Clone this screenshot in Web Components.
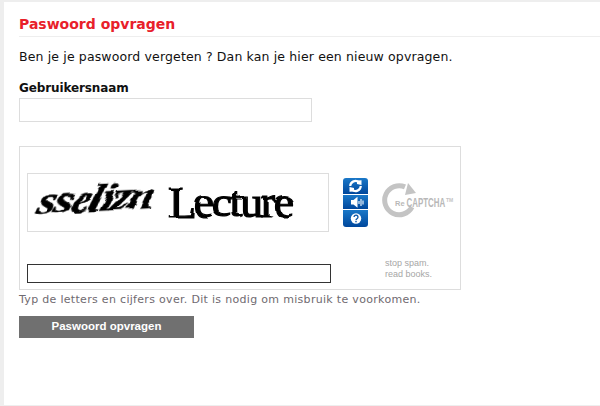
<!DOCTYPE html>
<html>
<head>
<meta charset="utf-8">
<title>Paswoord opvragen</title>
<style>
    html, body { margin: 0; height: 100%; }
    body { background: #eeeeee; font-family: "DejaVu Sans", Verdana, sans-serif; overflow: hidden; }
</style>
</head>
<body>
<request-page>
    <page-title>Paswoord opvragen</page-title>
    <p>Ben je je paswoord vergeten ? Dan kan je hier een nieuw opvragen.</p>
    <user-field label="Gebruikersnaam"></user-field>
    <captcha-box></captcha-box>
    <small>Typ de letters en cijfers over. Dit is nodig om misbruik te voorkomen.</small>
    <submit-button>Paswoord opvragen</submit-button>
</request-page>

<script>
class RequestPage extends HTMLElement {
    constructor() {
        super();
        this.attachShadow({ mode: 'open' });
        this.shadowRoot.innerHTML = `
            <style>
                :host {
                    display: block;
                    box-sizing: border-box;
                    height: 403px;
                    margin: 2px 0 0 4px;
                    padding-left: 15px;
                    background: #fff;
                }
                ::slotted(p) {
                    margin: 12px 0 0;
                    font-size: 12.5px;
                    line-height: 15px;
                    letter-spacing: 0.14px;
                    color: #111;
                }
                ::slotted(small) {
                    display: block;
                    margin-top: 2px;
                    font-size: 11px;
                    line-height: 15px;
                    letter-spacing: 0.31px;
                    color: #6f6a70;
                }
            </style>
            <slot></slot>
        `;
    }
}

class PageTitle extends HTMLElement {
    constructor() {
        super();
        this.attachShadow({ mode: 'open' });
        this.shadowRoot.innerHTML = `
            <style>
                :host {
                    display: block;
                    height: 35px;
                    box-sizing: border-box;
                    padding-top: 14px;
                    border-bottom: 1px solid #eeeeee;
                    font-size: 14px;
                    line-height: 17px;
                    font-weight: bold;
                    color: #e8202a;
                }
            </style>
            <slot></slot>
        `;
    }
}

class UserField extends HTMLElement {
    constructor() {
        super();
        this.attachShadow({ mode: 'open' });
        this.shadowRoot.innerHTML = `
            <style>
                :host { display: block; margin-top: 17px; }
                label {
                    display: block;
                    font-size: 12px;
                    line-height: 15px;
                    letter-spacing: -0.12px;
                    font-weight: bold;
                    color: #111;
                    margin-bottom: 2px;
                }
                input {
                    display: block;
                    box-sizing: border-box;
                    width: 293px;
                    height: 24px;
                    margin: 0;
                    padding: 2px;
                    border: 1px solid #dddddd;
                    background: #fff;
                    outline: none;
                }
            </style>
            <label></label>
            <input type="text">
        `;
        this.shadowRoot.querySelector('label').textContent = this.getAttribute('label');
    }
}

class CaptchaBox extends HTMLElement {
    constructor() {
        super();
        this.attachShadow({ mode: 'open' });
        this.shadowRoot.innerHTML = `
            <style>
                :host {
                    display: flex;
                    box-sizing: border-box;
                    width: 442px;
                    height: 144px;
                    margin-top: 24px;
                    padding: 26px 0 0 7px;
                    border: 1px solid #dddddd;
                    background: #fff;
                }
                .left { width: 316px; flex: none; }
                .image {
                    box-sizing: border-box;
                    width: 302px;
                    height: 59px;
                    border: 1px solid #dddddd;
                    padding: 0 0 0 7px;
                    display: flex;
                    align-items: center;
                    font-family: "Liberation Serif", serif;
                    color: #000;
                    overflow: hidden;
                    white-space: nowrap;
                }
                .w1 {
                    display: block;
                    width: 133px;
                    flex: none;
                    font-size: 38px;
                    font-weight: bold;
                    font-style: italic;
                    letter-spacing: -1.5px;
                    transform: translate(4px, -2px) rotate(-3deg) scaleX(1.24) skewX(-16deg);
                    transform-origin: left center;
                    -webkit-text-stroke: 0.6px #000;
                    filter: url(#warp1);
                }
                .w2 {
                    display: block;
                    font-size: 44px;
                    letter-spacing: -2.2px;
                    transform: translate(0, 0) scaleX(1.04);
                    transform-origin: left center;
                    -webkit-text-stroke: 1.2px #000;
                    filter: url(#warp2);
                }
                .warp { position: absolute; width: 0; height: 0; }
                input {
                    display: block;
                    box-sizing: border-box;
                    width: 304px;
                    height: 19px;
                    margin: 32px 0 0;
                    padding: 1px;
                    border: 1px solid #333;
                    background: #fff;
                    outline: none;
                }
                .right {
                    display: flex;
                    flex-direction: column;
                }
                .top { display: flex; margin-top: 5px; }
                .buttons {
                    width: 25px;
                    height: 49px;
                    flex: none;
                    display: block;
                }
                .logo { margin: 5px 0 0 13px; display: block; }
                .tag {
                    margin: 31px 0 0 42px;
                    font-family: "Liberation Sans", Arial, sans-serif;
                    font-size: 9px;
                    line-height: 11px;
                    color: #a6a6a6;
                }
            </style>
            <svg class="warp">
                <filter id="warp1" x="-10%" y="-20%" width="120%" height="140%">
                    <feTurbulence type="fractalNoise" baseFrequency="0.05 0.09" numOctaves="2" seed="4"/>
                    <feDisplacementMap in="SourceGraphic" scale="6"/>
                </filter>
                <filter id="warp2" x="-10%" y="-20%" width="120%" height="140%">
                    <feTurbulence type="fractalNoise" baseFrequency="0.035 0.06" numOctaves="2" seed="9"/>
                    <feDisplacementMap in="SourceGraphic" scale="5"/>
                </filter>
            </svg>
            <div class="left">
                <div class="image"><span class="w1">sselizn</span><span class="w2">Lecture</span></div>
                <input type="text">
            </div>
            <div class="right">
                <div class="top">
                    <svg class="buttons" viewBox="0 0 25 49">
                        <defs>
                            <linearGradient id="b" x1="0" y1="0" x2="0" y2="1">
                                <stop offset="0" stop-color="#1a78c8"/>
                                <stop offset="1" stop-color="#00479c"/>
                            </linearGradient>
                        </defs>
                        <path d="M3 0H22a3 3 0 0 1 3 3V16H0V3a3 3 0 0 1 3-3z" fill="url(#b)"/>
                        <rect y="17" width="25" height="14" fill="url(#b)"/>
                        <path d="M0 32H25V46a3 3 0 0 1-3 3H3a3 3 0 0 1-3-3z" fill="url(#b)"/>
                        <path d="M7.2 8a5.3 5.3 0 0 1 8.8-3.7" fill="none" stroke="#fff" stroke-width="2.2"/>
                        <path d="M14 2.5L18.5 2.2V7L14 6z" fill="#fff"/>
                        <path d="M17.8 8a5.3 5.3 0 0 1-8.8 3.7" fill="none" stroke="#fff" stroke-width="2.2"/>
                        <path d="M11 13.5L6.5 13.8V9L11 10z" fill="#fff"/>
                        <path d="M8 22h2.5l4-3.2v11L10.500 26.500H8z" fill="#fff"/>
                        <path d="M16 23v3M18 21v7M20 22.500v4" stroke="#fff" stroke-width="1.1" fill="none"/>
                        <circle cx="13" cy="40.500" r="5.200" fill="#fff"/>
                        <path d="M11 39a2 2 0 1 1 3 1.800c-.7.4-1 .7-1 1.400" fill="none" stroke="#0a56a8" stroke-width="1.300"/>
                        <rect x="12.300" y="43" width="1.400" height="1.300" fill="#0a56a8"/>
                    </svg>
                    <svg class="logo" width="76" height="38" viewBox="0 0 76 38">
                        <path d="M24 3.900A14.500 14.500 0 1 0 31 24" fill="none" stroke="#c4c4c4" stroke-width="5"/>
                        <path d="M27 0L35 10L24 12z" fill="#c4c4c4"/>
                        <text x="14" y="23" font-family="Liberation Sans" font-size="7.500" font-weight="bold" fill="#b8b8b8">Re</text>
                        <text transform="translate(25.500 24) scale(0.66 1)" font-family="Liberation Sans" font-size="12" font-weight="bold" fill="#b8b8b8">CAPTCHA</text>
                        <text x="65" y="19" font-family="Liberation Sans" font-size="5" font-weight="bold" fill="#c4c4c4">TM</text>
                    </svg>
                </div>
                <div class="tag">stop spam.<br>read books.</div>
            </div>
        `;
    }
}

class SubmitButton extends HTMLElement {
    constructor() {
        super();
        this.attachShadow({ mode: 'open' });
        this.shadowRoot.innerHTML = `
            <style>
                :host {
                    display: block;
                    width: 175px;
                    height: 22px;
                    margin-top: 9px;
                    background: #707070;
                    color: #fff;
                    font-family: "Liberation Sans", Arial, sans-serif;
                    font-size: 11.5px;
                    font-weight: bold;
                    line-height: 21px;
                    text-align: center;
                    cursor: pointer;
                }
            </style>
            <slot></slot>
        `;
    }
}

customElements.define('request-page', RequestPage);
customElements.define('page-title', PageTitle);
customElements.define('user-field', UserField);
customElements.define('captcha-box', CaptchaBox);
customElements.define('submit-button', SubmitButton);
</script>
</body>
</html>
